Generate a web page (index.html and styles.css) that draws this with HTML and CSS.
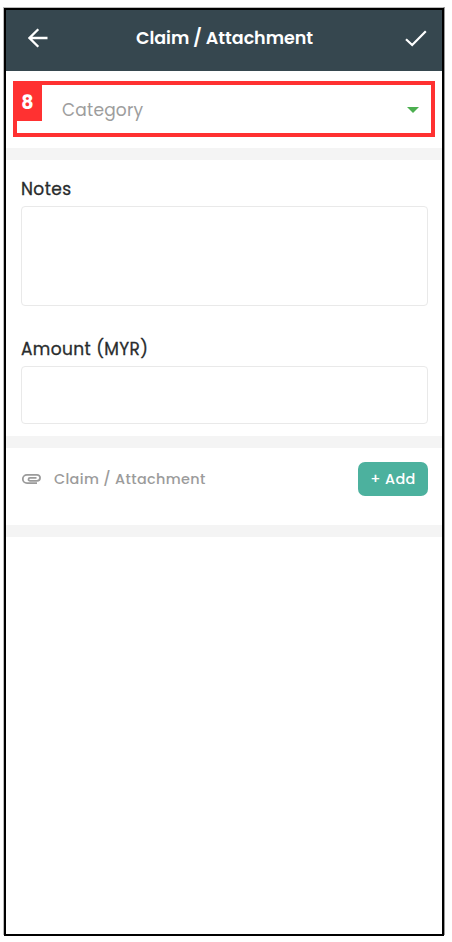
FILE: index.html
```html
<!DOCTYPE html>
<html lang="en">
<head>
<meta charset="utf-8">
<title>Claim / Attachment</title>
<link rel="stylesheet" href="styles.css">
</head>
<body>
<main class="phone">
  <header class="bar">
    <svg class="back" viewBox="0 0 20 20"><path d="M19.5 10H2M10.300 1.200L1.500 10l8.800 8.800"/></svg>
    <h1 class="title"><span>Claim / Attachment</span></h1>
    <svg class="check" viewBox="0 0 22 17"><path d="M1 9.200L7.200 15 20.800 1.300"/></svg>
  </header>
  <section class="category">
    <div class="select">
      <span class="step">8</span>
      <span class="placeholder">Category</span>
      <svg class="caret" viewBox="0 0 12 6"><path d="M0 0h12L6 6z"/></svg>
    </div>
  </section>
  <section class="fields">
    <label class="label" for="notes">Notes</label>
    <div class="input notes" id="notes"></div>
    <label class="label" for="amount">Amount (MYR)</label>
    <div class="input amount" id="amount"></div>
  </section>
  <section class="attach">
    <svg class="clip" viewBox="0 0 20 12"><path d="M15 10.200H5a4.200 4.200 0 0 1 0-8.400H15a3 3 0 0 1 0 6.100H8a1.500 1.500 0 0 1 0-3H14.500"/></svg>
    <span class="attach-text">Claim / Attachment</span>
    <button class="add">+ Add</button>
  </section>
</main>
</body>
</html>
```
FILE: styles.css
```css
* { box-sizing: border-box; }
body { margin: 0; padding: 8px 0 0 4px; background: #fff; font-family: Poppins, Inter, "Liberation Sans", sans-serif; }
svg { display: block; fill: none; flex: none; }
.phone { width: 440px; height: 928px; border: 2px solid #000; box-shadow: -1px -1px 0 #bbb, 1px -1px 0 #999; background: #fff; }
.bar { height: 61px; background: #36474f; display: flex; align-items: flex-start; padding: 0 15px 0 22px; }
.back { width: 20px; height: 20px; margin-top: 18px; stroke: #fff; stroke-width: 2.3; }
.title { flex: 1; margin: 16px 0 0; padding-right: 4px; text-align: center; color: #fff; font-size: 17.5px; line-height: 25px; font-weight: 600; letter-spacing: -.05px; white-space: nowrap; }
.check { width: 22px; height: 17px; margin-top: 20px; stroke: #fff; stroke-width: 2.2; }
.category { height: 89px; padding: 10px 7px 0; border-bottom: 12px solid #f4f4f4; }
.select { height: 56px; border: 4px solid #ff3131; display: flex; align-items: flex-start; }
.step { width: 29px; height: 40px; margin: -4px 0 0 -4px; background: #ff3131; color: #fff; font-size: 19px; font-weight: 700; line-height: 43px; text-align: center; }
.placeholder { margin: 13px auto 0 20px; color: #9d9d9d; font-size: 17px; line-height: 25px; letter-spacing: .2px; }
.caret { width: 12px; height: 6px; margin: 22px 12px 0 0; fill: #4caf50; }
.fields { height: 288px; padding: 16px 14px 0 15px; border-bottom: 12px solid #f4f4f4; display: flex; flex-direction: column; }
.label { align-self: flex-start; height: 30px; line-height: 26px; font-size: 17px; font-weight: 400; color: #292c2d; letter-spacing: .4px; white-space: nowrap; -webkit-text-stroke: .3px #292c2d; }
.input { border: 1px solid #e9e9e9; border-radius: 4px; }
.notes { height: 100px; margin-bottom: 30px; }
.amount { height: 58px; }
.attach { height: 89px; padding: 14px 14px 0 16px; border-bottom: 12px solid #f4f4f4; display: flex; align-items: flex-start; }
.clip { width: 20px; height: 12px; margin-top: 11px; stroke: #9b9b9b; stroke-width: 1.8; }
.attach-text { margin: 5px auto 0 12px; color: #9b9b9b; font-size: 14.4px; font-weight: 500; line-height: 25px; letter-spacing: .35px; white-space: nowrap; }
.add { width: 70px; height: 34px; padding: 0; border: 0; border-radius: 7px; background: #4cb19e; color: #fff; font: inherit; font-size: 14.4px; font-weight: 500; letter-spacing: .35px; }
```
